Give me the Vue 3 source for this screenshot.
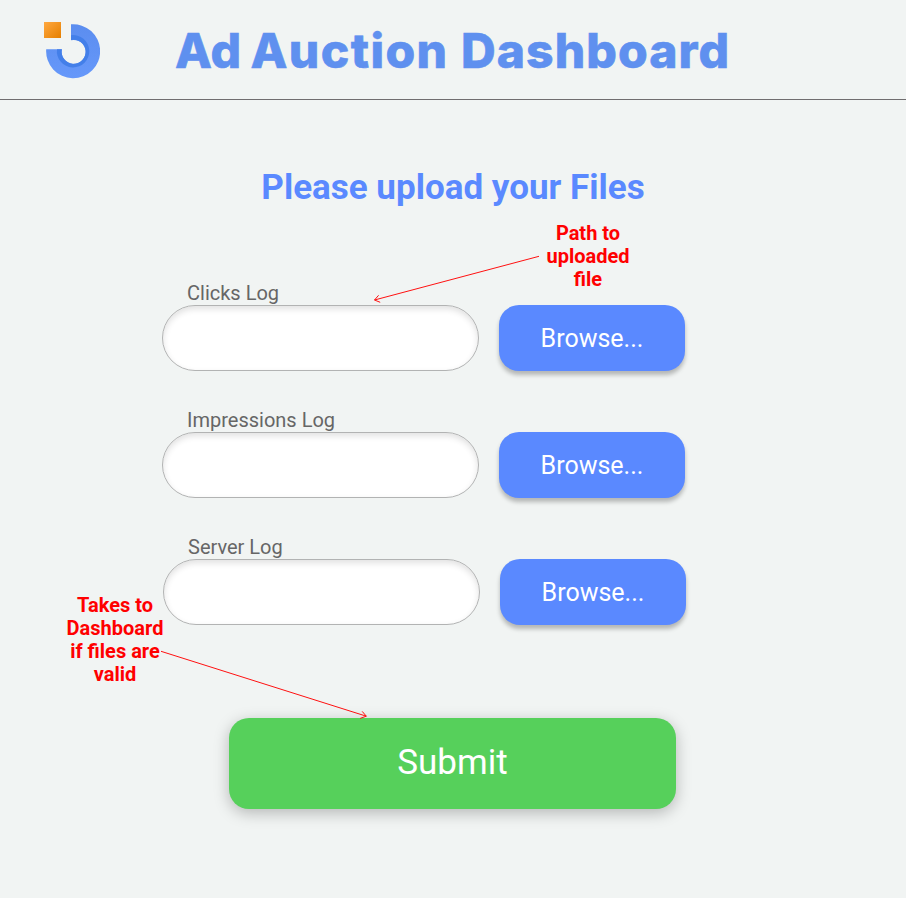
<script setup>
const logs = [
  { id: 'clicks', label: 'Clicks Log' },
  { id: 'impressions', label: 'Impressions Log' },
  { id: 'server', label: 'Server Log' },
]
</script>

<template>
  <div class="page">
    <header class="header">
      <svg class="logo" viewBox="0 0 60 60" width="60" height="60" aria-hidden="true">
        <defs>
          <linearGradient id="square" x1="0" y1="0" x2="1" y2="1">
            <stop offset="0" stop-color="#ffa840" />
            <stop offset="1" stop-color="#e57f00" />
          </linearGradient>
          <linearGradient id="ring" x1="0" y1="0" x2="0" y2="1">
            <stop offset="0" stop-color="#5b8def" />
            <stop offset="1" stop-color="#6698fa" />
          </linearGradient>
        </defs>
        <rect x="4" y="2" width="17" height="16" fill="url(#square)" />
        <path d="M31 4.3A27 27 0 1 1 6.2 29.3H21.9A12 12 0 1 0 31 20.2Z" fill="url(#ring)" />
        <path d="M31 15.2A16.2 16.2 0 1 1 17 29.3H21.9A12 12 0 1 0 31 20Z" fill="#437fe9" />
      </svg>
      <h1 class="title">
        <span>Ad</span> <span class="auction">Auction</span> <span class="dashboard">Dashboard</span>
      </h1>
    </header>

    <main class="main">
      <h2 class="heading">Please upload your Files</h2>

      <form class="form" @submit.prevent>
        <div v-for="log in logs" :key="log.id" class="row" :class="log.id">
          <div class="field">
            <label class="label" :for="log.id">{{ log.label }}</label>
            <input :id="log.id" class="input" type="text" />
          </div>
          <button class="browse" type="button">Browse...</button>
        </div>
        <button class="submit" type="submit">Submit</button>
      </form>
    </main>

    <svg class="arrows" viewBox="0 0 906 898" width="906" height="898" aria-hidden="true">
      <path d="M539 256.3L374.5 300M378.6 295.3L374.5 300L380.2 302.3" />
      <path d="M161 651.3L366.3 716.2M362.2 711.4L366.3 716.2L360.2 718.4" />
    </svg>
    <p class="note note-path">Path to<br />uploaded<br />file</p>
    <p class="note note-submit">Takes to<br />Dashboard<br />if files are<br />valid</p>
  </div>
</template>

<style>
body {
  margin: 0;
  background: #fff;
}
</style>

<style scoped>
.page {
  position: relative;
  box-sizing: border-box;
  width: 906px;
  height: 898px;
  background: #f1f4f3;
  font-family: Roboto, "Liberation Sans", sans-serif;
}
.header {
  display: flex;
  box-sizing: border-box;
  height: 100px;
  padding: 20px 0 0 40px;
  border-bottom: 1px solid #706d6f;
}
.logo {
  flex: none;
}
.title {
  margin: 0 0 0 75px;
  color: #5f90ef;
  font: 800 48px/62px Inter, sans-serif;
  white-space: nowrap;
  -webkit-text-stroke: 0.6px #5f90ef;
}
.auction {
  margin-left: -1px;
  letter-spacing: 1.4px;
}
.dashboard {
  margin-left: 2px;
  letter-spacing: 1.1px;
}
.main {
  display: flex;
  flex-direction: column;
  align-items: center;
  padding-top: 67px;
}
.heading {
  margin: 0;
  color: #5a89ff;
  font-size: 35px;
  font-weight: 700;
  line-height: 42px;
}
.form {
  display: flex;
  flex-direction: column;
  width: 582px;
  margin-top: 73px;
}
.row {
  display: flex;
  align-items: flex-end;
  gap: 20px;
  height: 89px;
  margin-bottom: 38px;
}
.row.server {
  padding-left: 1px;
}
.field {
  display: flex;
  flex-direction: column;
}
.label {
  height: 23px;
  padding-left: 25px;
  color: #666;
  font-size: 20px;
  line-height: 23px;
}
.input {
  box-sizing: border-box;
  width: 317px;
  height: 66px;
  padding: 0 25px;
  border: 1px solid #b2b3b3;
  border-radius: 33px;
  background: #fff;
  box-shadow: inset 0 3px 6px rgba(0, 0, 0, 0.12);
  font: 20px Roboto, sans-serif;
}
.browse,
.submit {
  padding: 0;
  border: 0;
  border-radius: 20px;
  color: #fff;
  font-family: inherit;
}
.browse {
  width: 186px;
  height: 66px;
  background: #5a89ff;
  box-shadow: 0 4px 4px rgba(0, 0, 0, 0.25);
  font-size: 25px;
}
.submit {
  align-self: flex-start;
  width: 447px;
  height: 91px;
  margin: 55px 0 0 67px;
  padding-bottom: 2px;
  background: #56d05b;
  box-shadow: 0 4px 15px rgba(0, 0, 0, 0.25);
  font-size: 35px;
}
.arrows {
  position: absolute;
  top: 0;
  left: 0;
  fill: none;
  stroke: #ff1010;
  stroke-width: 1;
  pointer-events: none;
}
.note {
  position: absolute;
  margin: 0;
  color: #f00;
  font-size: 20px;
  font-weight: 700;
  line-height: 23px;
  text-align: center;
}
.note-path {
  top: 222px;
  left: 538px;
  width: 100px;
}
.note-submit {
  top: 594px;
  left: 60px;
  width: 110px;
}
</style>
